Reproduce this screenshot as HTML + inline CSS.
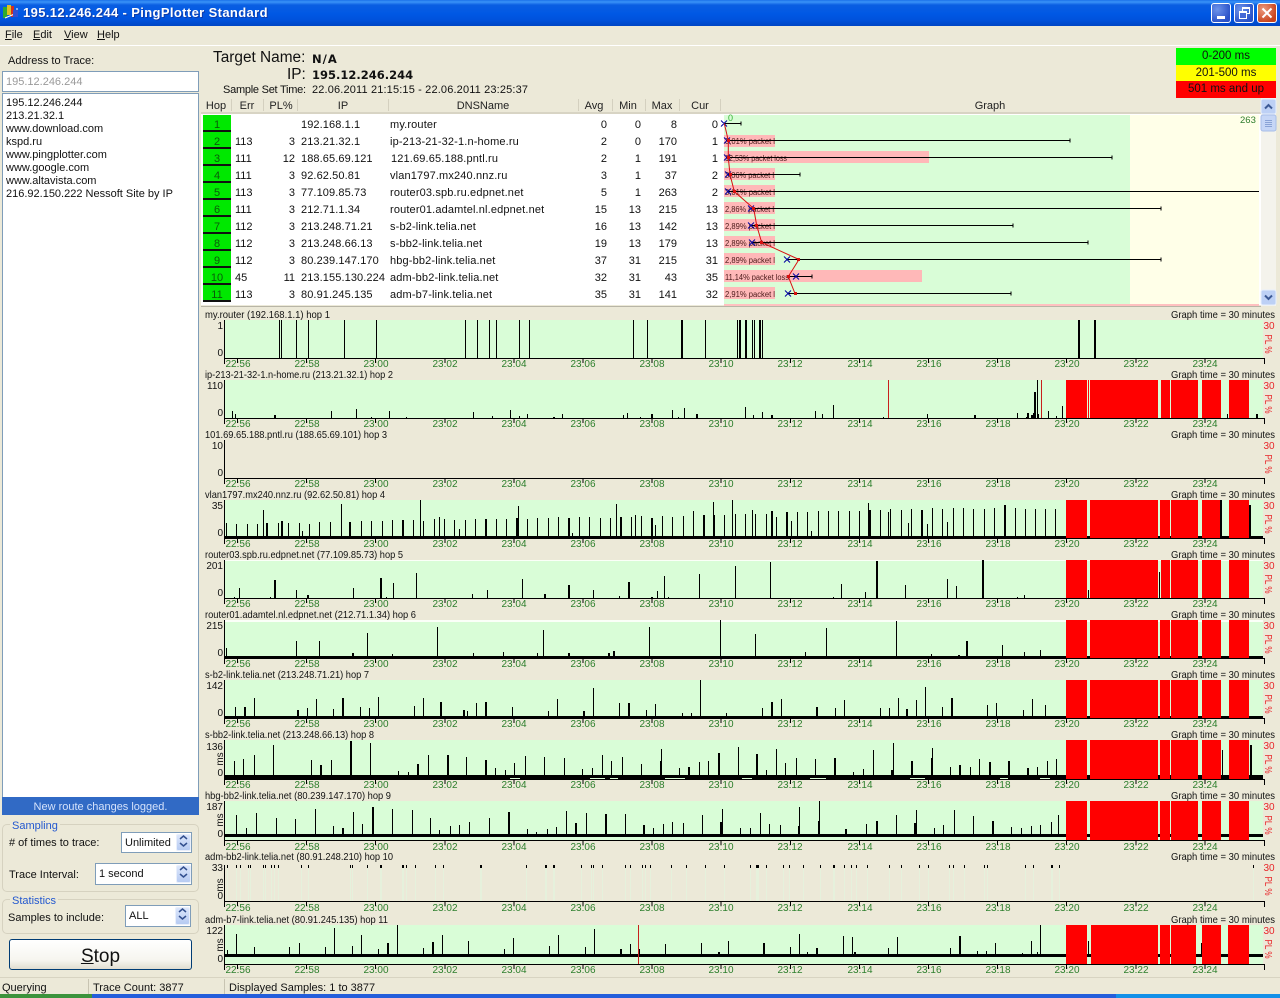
<!DOCTYPE html>
<html><head><meta charset="utf-8"><title>PingPlotter Standard</title>
<style>
*{box-sizing:border-box}
html,body{margin:0;padding:0;width:1280px;height:998px;overflow:hidden;background:#ece9d8;font-family:"Liberation Sans",sans-serif;font-size:11px;color:#111}
.a{position:absolute;white-space:nowrap}
#tb{left:0;top:0;width:1280px;height:26px;background:linear-gradient(#1c72ea 0,#3a93f7 2px,#0a5ee2 5px,#0058e4 14px,#0052dc 20px,#0046c4 26px)}
.wb{position:absolute;top:3px;width:20px;height:20px;border:1px solid #fff;border-radius:3px;background:radial-gradient(circle at 30% 30%,#6d93ea,#2a52c8 75%)}
.inp{position:absolute;background:#fff;border:1px solid #7f9db9;padding:3px 3px 1px}
.sp{position:absolute;width:15px;background:linear-gradient(#dbe6fb,#b7cbf2);border:1px solid #e9effb;border-radius:2px}
.gb{position:absolute;border:1px solid #d6d2c0;border-radius:5px}
.lg{position:absolute;background:#ece9d8;color:#2358cf;padding:0 2px;font-size:11px}
#stop{left:9px;top:939px;width:183px;height:31px;background:linear-gradient(#fff,#f6f5ef 70%,#e0ddd0);border:1px solid #003c74;border-radius:3px;font-size:19px;text-align:center;line-height:34px;color:#111}
.lgd{position:absolute;left:1176px;width:100px;text-align:center;font-size:11.5px;line-height:17px;height:17px}
svg text{font-family:"Liberation Sans",sans-serif}
</style></head><body>

<div class="a" id="tb"></div>
<svg class="a" style="left:3px;top:4px" width="16" height="16"><rect x="0" y="3" width="4" height="11" fill="#2faa2f"/><rect x="4" y="1" width="4" height="10" fill="#e0c020"/><rect x="8" y="2" width="3" height="11" fill="#d03020"/><path d="M2 14L14 9V4" stroke="#fff" fill="none"/><rect x="10" y="6" width="5" height="7" fill="#3050d0"/></svg>
<div class="a" style="left:23px;top:5px;color:#fff;font-weight:bold;font-size:13px;line-height:16px;letter-spacing:.37px;text-shadow:1px 1px 0 #0f3aa8">195.12.246.244 - PingPlotter Standard</div>
<div class="wb" style="left:1211px"><div style="position:absolute;left:5px;top:12px;width:8px;height:3px;background:#fff"></div></div>
<div class="wb" style="left:1234px"><div style="position:absolute;left:7px;top:3px;width:8px;height:7px;border:1px solid #fff;border-top-width:2px"></div><div style="position:absolute;left:4px;top:7px;width:8px;height:8px;border:1px solid #fff;border-top-width:2px;background:#4468d6"></div></div>
<div class="wb" style="left:1257px;background:radial-gradient(circle at 30% 30%,#ec9a7e,#c8431c 75%)"><svg width="18" height="18" style="position:absolute;left:0;top:0"><path d="M4.500 4.500L13.500 13.500M13.500 4.500L4.500 13.500" stroke="#fff" stroke-width="2"/></svg></div>

<div class="a" style="left:5px;top:28px;line-height:14px"><u>F</u>ile</div>
<div class="a" style="left:33px;top:28px;line-height:14px"><u>E</u>dit</div>
<div class="a" style="left:64px;top:28px;line-height:14px"><u>V</u>iew</div>
<div class="a" style="left:97px;top:28px;line-height:14px"><u>H</u>elp</div>
<div class="a" style="left:0;top:45px;width:1280px;height:1px;background:#fff"></div>

<div class="a" style="left:8px;top:54px;line-height:14px">Address to Trace:</div>
<div class="inp a" style="left:2px;top:71px;width:197px;height:21px;color:#9a9a9a;line-height:15px">195.12.246.244</div>
<div class="inp a" style="left:2px;top:93px;width:197px;height:705px;line-height:13px;padding:3px 3px">195.12.246.244<br>213.21.32.1<br>www.download.com<br>kspd.ru<br>www.pingplotter.com<br>www.google.com<br>www.altavista.com<br>216.92.150.222 Nessoft Site by IP</div>
<div class="a" style="left:2px;top:797px;width:197px;height:18px;background:#316ac5;color:#d4e2fb;text-align:center;line-height:20px">New route changes logged.</div>

<div class="gb" style="left:2px;top:824px;width:197px;height:68px"></div>
<div class="lg" style="left:10px;top:820px">Sampling</div>
<div class="a" style="left:9px;top:836px;line-height:14px">&#35; of times to trace:</div>
<div class="inp" style="left:121px;top:832px;width:71px;height:21px;line-height:15px">Unlimited</div>
<div class="sp" style="left:176px;top:834px;height:17px"></div>
<div class="a" style="left:9px;top:868px;line-height:14px">Trace Interval:</div>
<div class="inp" style="left:95px;top:863px;width:97px;height:22px;line-height:15px">1 second</div>
<div class="sp" style="left:176px;top:865px;height:18px"></div>

<div class="gb" style="left:2px;top:899px;width:197px;height:35px"></div>
<div class="lg" style="left:10px;top:895px">Statistics</div>
<div class="a" style="left:8px;top:911px;line-height:14px">Samples to include:</div>
<div class="inp" style="left:125px;top:905px;width:66px;height:22px;line-height:15px">ALL</div>
<div class="sp" style="left:175px;top:907px;height:18px"></div>
<svg class="a" style="left:0;top:830px" width="200" height="100"><path d="M180 9L183.500 6L187 9M180 13L183.500 16L187 13M180 40L183.500 37L187 40M180 44L183.500 47L187 44M179 82L182.500 79L186 82M179 86L182.500 89L186 86" fill="none" stroke="#33508f" stroke-width="1.500"/></svg>

<div class="a" id="stop"><u>S</u>top</div>

<div class="a" style="left:0;top:977px;width:1280px;height:1px;background:#d8d4c2"></div>
<div class="a" style="left:2px;top:981px;line-height:14px">Querying</div>
<div class="a" style="left:88px;top:979px;width:1px;height:15px;background:#c8c4b2"></div>
<div class="a" style="left:93px;top:981px;line-height:14px">Trace Count: 3877</div>
<div class="a" style="left:224px;top:979px;width:1px;height:15px;background:#c8c4b2"></div>
<div class="a" style="left:229px;top:981px;line-height:14px">Displayed Samples: 1 to 3877</div>
<div class="a" style="left:0;top:994px;width:1280px;height:4px;background:#245edb"></div>
<div class="a" style="left:0;top:994px;width:92px;height:4px;background:#3c933c"></div>
<div class="a" style="left:1116px;top:994px;width:164px;height:4px;background:#1290e8"></div>

<div class="a" style="left:213px;top:49px;font-size:15.400px;line-height:18px">Target Name:</div>
<div class="a" style="left:312px;top:51px;font-family:'DejaVu Sans',sans-serif;font-weight:bold;font-size:11.500px;line-height:16px;letter-spacing:1px">N/A</div>
<div class="a" style="left:287px;top:66px;font-size:15.400px;line-height:18px">IP:</div>
<div class="a" style="left:312px;top:67px;font-family:'DejaVu Sans',sans-serif;font-weight:bold;font-size:11.500px;line-height:16px">195.12.246.244</div>
<div class="a" style="left:223px;top:83px;line-height:14px;letter-spacing:-.25px">Sample Set Time:</div>
<div class="a" style="left:312px;top:83px;line-height:14px;letter-spacing:.15px">22.06.2011 21:15:15 - 22.06.2011 23:25:37</div>

<div class="lgd" style="top:48px;background:#00ff00">0-200 ms</div>
<div class="lgd" style="top:65px;background:#ffff00">201-500 ms</div>
<div class="lgd" style="top:81px;background:#ff0000">501 ms and up</div>

<svg class="a" style="left:0;top:0" width="1280" height="998" viewBox="0 0 1280 998">
<defs><linearGradient id="g10" gradientUnits="userSpaceOnUse" x1="0" y1="865" x2="0" y2="901"><stop offset=".08" stop-color="#000"/><stop offset=".08" stop-color="#e6f1dc"/></linearGradient></defs>

<!-- table -->
<rect x="201" y="112" width="1060" height="2" fill="#d8d4c4"/>
<rect x="201" y="114" width="1060" height="191" fill="#fff"/>
<rect x="724" y="115" width="406" height="190" fill="#d9fdd7"/>
<rect x="1130" y="115" width="129" height="190" fill="#ffffe8"/>
<rect x="724" y="304" width="535" height="2" fill="#ffc0c0"/>
<rect x="201" y="306" width="1060" height="1" fill="#b8b5a6"/>
<g fill="#d4d0bf"><rect x="231" y="99" width="1" height="12"/><rect x="263" y="99" width="1" height="12"/><rect x="297" y="99" width="1" height="12"/><rect x="388" y="99" width="1" height="12"/><rect x="578" y="99" width="1" height="12"/><rect x="612" y="99" width="1" height="12"/><rect x="645" y="99" width="1" height="12"/><rect x="679" y="99" width="1" height="12"/><rect x="720" y="99" width="1" height="12"/></g>
<g font-size="11" text-anchor="middle" fill="#222">
<text x="216" y="109">Hop</text><text x="247" y="109">Err</text><text x="281" y="109">PL%</text><text x="343" y="109">IP</text><text x="483" y="109">DNSName</text><text x="594" y="109">Avg</text><text x="628" y="109">Min</text><text x="662" y="109">Max</text><text x="700" y="109">Cur</text><text x="990" y="109">Graph</text>
</g>
<!-- hop cells -->
<g fill="#00e800"><rect x="203" y="115" width="28" height="15"/><rect x="203" y="132" width="28" height="15"/><rect x="203" y="149" width="28" height="15"/><rect x="203" y="166" width="28" height="15"/><rect x="203" y="183" width="28" height="15"/><rect x="203" y="200" width="28" height="15"/><rect x="203" y="217" width="28" height="15"/><rect x="203" y="234" width="28" height="15"/><rect x="203" y="251" width="28" height="15"/><rect x="203" y="268" width="28" height="15"/><rect x="203" y="285" width="28" height="15"/></g>
<g fill="#111"><rect x="203" y="130" width="28" height="2"/><rect x="203" y="147" width="28" height="2"/><rect x="203" y="164" width="28" height="2"/><rect x="203" y="181" width="28" height="2"/><rect x="203" y="198" width="28" height="2"/><rect x="203" y="215" width="28" height="2"/><rect x="203" y="232" width="28" height="2"/><rect x="203" y="249" width="28" height="2"/><rect x="203" y="266" width="28" height="2"/><rect x="203" y="283" width="28" height="2"/><rect x="203" y="300" width="28" height="2"/></g>
<g font-size="11" text-anchor="middle" fill="#0a5a0a"><text x="217" y="128">1</text><text x="217" y="145">2</text><text x="217" y="162">3</text><text x="217" y="179">4</text><text x="217" y="196">5</text><text x="217" y="213">6</text><text x="217" y="230">7</text><text x="217" y="247">8</text><text x="217" y="264">9</text><text x="217" y="281">10</text><text x="217" y="298">11</text></g>
<g font-size="11" fill="#111">
<text x="235" y="145">113</text><text x="235" y="162">111</text><text x="235" y="179">111</text><text x="235" y="196">113</text><text x="235" y="213">111</text><text x="235" y="230">112</text><text x="235" y="247">112</text><text x="235" y="264">112</text><text x="235" y="281">45</text><text x="235" y="298">113</text>
<g letter-spacing=".1"><text x="301" y="128">192.168.1.1</text><text x="301" y="145">213.21.32.1</text><text x="301" y="162">188.65.69.121</text><text x="301" y="179">92.62.50.81</text><text x="301" y="196">77.109.85.73</text><text x="301" y="213">212.71.1.34</text><text x="301" y="230">213.248.71.21</text><text x="301" y="247">213.248.66.13</text><text x="301" y="264">80.239.147.170</text><text x="301" y="281">213.155.130.224</text><text x="301" y="298">80.91.245.135</text></g>
<g letter-spacing=".15"><text x="390" y="128">my.router</text><text x="390" y="145">ip-213-21-32-1.n-home.ru</text><text x="391" y="162">121.69.65.188.pntl.ru</text><text x="390" y="179">vlan1797.mx240.nnz.ru</text><text x="390" y="196">router03.spb.ru.edpnet.net</text><text x="390" y="213">router01.adamtel.nl.edpnet.net</text><text x="390" y="230">s-b2-link.telia.net</text><text x="390" y="247">s-bb2-link.telia.net</text><text x="390" y="264">hbg-bb2-link.telia.net</text><text x="390" y="281">adm-bb2-link.telia.net</text><text x="390" y="298">adm-b7-link.telia.net</text></g>
</g>
<g font-size="11" fill="#111" text-anchor="end">
<text x="295" y="145">3</text><text x="295" y="162">12</text><text x="295" y="179">3</text><text x="295" y="196">3</text><text x="295" y="213">3</text><text x="295" y="230">3</text><text x="295" y="247">3</text><text x="295" y="264">3</text><text x="295" y="281">11</text><text x="295" y="298">3</text>
<text x="607" y="128">0</text><text x="607" y="145">2</text><text x="607" y="162">2</text><text x="607" y="179">3</text><text x="607" y="196">5</text><text x="607" y="213">15</text><text x="607" y="230">16</text><text x="607" y="247">19</text><text x="607" y="264">37</text><text x="607" y="281">32</text><text x="607" y="298">35</text>
<text x="641" y="128">0</text><text x="641" y="145">0</text><text x="641" y="162">1</text><text x="641" y="179">1</text><text x="641" y="196">1</text><text x="641" y="213">13</text><text x="641" y="230">13</text><text x="641" y="247">13</text><text x="641" y="264">31</text><text x="641" y="281">31</text><text x="641" y="298">31</text>
<text x="677" y="128">8</text><text x="677" y="145">170</text><text x="677" y="162">191</text><text x="677" y="179">37</text><text x="677" y="196">263</text><text x="677" y="213">215</text><text x="677" y="230">142</text><text x="677" y="247">179</text><text x="677" y="264">215</text><text x="677" y="281">43</text><text x="677" y="298">141</text>
<text x="718" y="128">0</text><text x="718" y="145">1</text><text x="718" y="162">1</text><text x="718" y="179">2</text><text x="718" y="196">2</text><text x="718" y="213">13</text><text x="718" y="230">13</text><text x="718" y="247">13</text><text x="718" y="264">31</text><text x="718" y="281">35</text><text x="718" y="298">32</text>
</g>
<!-- graph bars -->
<g fill="#ffb8b8"><rect x="724" y="135" width="51" height="12"/><rect x="724" y="151" width="205" height="12"/><rect x="724" y="168" width="51" height="12"/><rect x="724" y="185" width="51" height="12"/><rect x="724" y="202" width="51" height="12"/><rect x="724" y="219" width="51" height="12"/><rect x="724" y="236" width="51" height="12"/><rect x="724" y="253" width="51" height="12"/><rect x="724" y="270" width="198" height="12"/><rect x="724" y="287" width="51" height="12"/></g>
<g font-size="8" fill="#4a1818">
<text x="725" y="144" textLength="50" lengthAdjust="spacingAndGlyphs">3,01% packet l</text><text x="725" y="161" textLength="62" lengthAdjust="spacingAndGlyphs">12,53% packet loss</text><text x="725" y="178" textLength="49" lengthAdjust="spacingAndGlyphs">3,06% packet l</text><text x="725" y="195" textLength="50" lengthAdjust="spacingAndGlyphs">3,01% packet l</text><text x="725" y="212" textLength="49" lengthAdjust="spacingAndGlyphs">2,86% packet l</text><text x="725" y="229" textLength="50" lengthAdjust="spacingAndGlyphs">2,89% packet l</text><text x="725" y="246" textLength="50" lengthAdjust="spacingAndGlyphs">2,89% packet l</text><text x="725" y="263" textLength="50" lengthAdjust="spacingAndGlyphs">2,89% packet l</text><text x="725" y="280" textLength="64" lengthAdjust="spacingAndGlyphs">11,14% packet loss</text><text x="725" y="297" textLength="50" lengthAdjust="spacingAndGlyphs">2,91% packet l</text>
</g>
<path d="M724 123.500H741M741 121.500V125.500M726 140.500H1070M1070 138.500V142.500M726 157.500H1112M1112 155.500V159.500M728 174.500H800M800 172.500V176.500M728 191.500H1259M751 208.500H1161M1161 206.500V210.500M751 225.500H1013M1013 223.500V227.500M752 242.500H1088M1088 240.500V244.500M787 259.500H1161M1161 257.500V261.500M788 276.500H812M812 274.500V278.500M788 293.500H1011M1011 291.500V295.500" stroke="#000" fill="none" shape-rendering="crispEdges"/>
<path d="M721 120.500l6 6m0 -6l-6 6M724 137.500l6 6m0 -6l-6 6M724 154.500l6 6m0 -6l-6 6M725 171.500l6 6m0 -6l-6 6M725 188.500l6 6m0 -6l-6 6M748 205.500l6 6m0 -6l-6 6M748 222.500l6 6m0 -6l-6 6M749 239.500l6 6m0 -6l-6 6M784 256.500l6 6m0 -6l-6 6M793 273.500l6 6m0 -6l-6 6M785 290.500l6 6m0 -6l-6 6" stroke="#0000a0" fill="none"/>
<path d="M724.300 123.500L728.300 140.500L728.300 157.500L730 174.500L734.300 191.500L753.700 208.500L756.700 225.500L761.700 242.500L799 259.500L788.300 276.500L795 293.500" stroke="#d81010" fill="none" stroke-width="1"/>
<g fill="#d81010"><rect x="727" y="139" width="3" height="3"/><rect x="727" y="156" width="3" height="3"/><rect x="729" y="173" width="3" height="3"/><rect x="733" y="190" width="3" height="3"/><rect x="752" y="207" width="3" height="3"/><rect x="755" y="224" width="3" height="3"/><rect x="760" y="241" width="3" height="3"/><rect x="797" y="258" width="3" height="3"/><rect x="787" y="275" width="3" height="3"/><rect x="794" y="292" width="3" height="3"/></g>
<text x="728" y="121" font-size="9" fill="#33b033">0</text><text x="1240" y="123" font-size="9.500" fill="#2f7d2f">263</text>
<!-- scrollbar -->
<rect x="1261" y="98" width="15" height="208" fill="#f4f3ec"/>
<rect x="1261" y="99" width="15" height="15" rx="2" fill="#bdd0f5" stroke="#e8effc"/><path d="M1265 108.500L1268.500 105L1272 108.500" stroke="#3d5a96" stroke-width="2" fill="none"/>
<rect x="1261" y="115" width="15" height="16" rx="2" fill="#c6d6f6" stroke="#a8bee8"/><path d="M1265 120.500H1272M1265 122.500H1272M1265 124.500H1272M1265 126.500H1272" stroke="#8aa3d6"/>
<rect x="1261" y="290" width="15" height="15" rx="2" fill="#bdd0f5" stroke="#e8effc"/><path d="M1265 295.500L1268.500 299L1272 295.500" stroke="#3d5a96" stroke-width="2" fill="none"/>

<!-- chart plots -->
<g fill="#d9fdd7">
<rect x="225" y="320" width="1038" height="38"/><rect x="225" y="380" width="1038" height="38"/><rect x="225" y="500" width="1038" height="38"/><rect x="225" y="560" width="1038" height="38"/><rect x="225" y="620" width="1038" height="38"/><rect x="225" y="680" width="1038" height="38"/><rect x="225" y="740" width="1038" height="39"/><rect x="225" y="801" width="1038" height="39"/><rect x="225" y="925" width="1038" height="39"/>
</g>
<g fill="#fbfff8"><rect x="225" y="620" width="1038" height="2"/><rect x="225" y="560" width="1038" height="1"/></g>

<!-- thick baselines -->
<g fill="#000"><rect x="225" y="536" width="1038" height="3"/><rect x="225" y="656" width="1038" height="3"/><rect x="225" y="716" width="1038" height="3"/><rect x="225" y="775" width="1038" height="4"/><rect x="225" y="834" width="1038" height="3"/><rect x="225" y="954" width="1038" height="3"/></g>
<path d="M510 778.500H520M590 778.500H605M610 778.500H618M665 778.500H685M742 778.500H752M810 778.500H826M910 778.500H925M1000 778.500H1008M1040 778.500H1050" stroke="#d9fdd7" shape-rendering="crispEdges"/>

<g fill="none" stroke="#000" shape-rendering="crispEdges">
<!-- 1 -->
<path d="M279.500 320V358M281.500 320V358M296.500 320V358M308.500 320V358M344.500 320V358M376.500 320V358M465.500 320V358M477.500 320V358M489.500 320V358M496.500 320V358M519.500 320V358M529.500 320V358M633.500 320V358M647.500 320V358M705.500 320V358M737.500 320V358M752.500 320V358M754.500 320V358M762.500 320V358"/>
<path stroke-width="2" d="M682 320V358M740 320V358M746 320V358M760 320V358M1079 320V358M1095 320V358"/>
<!-- 2 -->
<path d="M232.500 411V418M235.500 414V418M331.500 411V418M356.500 409V418M389.500 411V418M371.500 417V418M406.500 417V418M473.500 412V418M492.500 416V418M510.500 410V418M519.500 416V418M527.500 414V418M562.500 414V418M623.500 415V418M627.500 413V418M640.500 417V418M672.500 410V418M678.500 417V418M684.500 408V418M745.500 407V418M753.500 415V418M762.500 412V418M815.500 411V418M822.500 414V418M833.500 405V418M883.500 417V418M927.500 414V418M1017.500 413V418M1026.500 417V418M1031.500 417V418M1033.500 413V418M1037.500 380V418M1038.500 414V418M1048.500 411V418M1056.500 416V418M1062.500 406V418M1227.500 414V418"/>
<path stroke-width="2" d="M275 415V418M554 417V418M652 414V418M697 414V418M772 415V418M975 415V418M1028 413V418M1032 415V418M1035 392V418M1257 414V418"/>
<path stroke="#c8201c" d="M888.500 380V418M1041.500 380V418"/>
<!-- 4 -->
<path d="M226.500 523V536M236.500 524V536M247.500 524V536M257.500 524V536M263.500 510V536M278.500 523V536M288.500 523V536M299.500 523V536M302.500 531V536M309.500 524V536M319.500 522V536M330.500 522V536M341.500 504V536M361.500 521V536M371.500 521V536M382.500 521V536M392.500 520V536M413.500 520V536M420.500 500V536M423.500 521V536M434.500 519V536M439.500 517V536M444.500 519V536M454.500 520V536M459.500 529V536M465.500 520V536M475.500 519V536M496.500 519V536M506.500 519V536M518.500 506V536M527.500 519V536M537.500 518V536M548.500 518V536M558.500 517V536M572.500 533V536M579.500 517V536M589.500 517V536M600.500 518V536M610.500 518V536M616.500 504V536M631.500 517V536M635.500 515V536M641.500 516V536M655.500 525V536M662.500 516V536M672.500 517V536M683.500 516V536M693.500 511V536M713.500 502V536M714.500 515V536M724.500 515V536M732.500 500V536M735.500 514V536M745.500 514V536M752.500 510V536M755.500 514V536M766.500 514V536M776.500 517V536M791.500 521V536M797.500 512V536M807.500 512V536M811.500 531V536M818.500 511V536M828.500 511V536M838.500 511V536M849.500 511V536M859.500 511V536M868.500 503V536M880.500 510V536M888.500 512V536M890.500 509V536M901.500 510V536M908.500 523V536M911.500 509V536M927.500 524V536M932.500 508V536M942.500 509V536M947.500 522V536M953.500 508V536M963.500 508V536M973.500 509V536M984.500 509V536M994.500 508V536M1015.500 508V536M1025.500 509V536M1035.500 509V536M1045.500 509V536M1055.500 509V536"/>
<path stroke-width="2" d="M267 523V536M282 521V536M350 522V536M403 520V536M486 519V536M517 518V536M569 518V536M621 517V536M652 518V536M704 515V536M772 511V536M787 512V536M870 510V536M922 510V536M1005 505V536M1221 500V536M1250 505V536"/>
<!-- 5 -->
<path d="M234.500 597V598M239.500 588V598M270.500 597V598M296.500 590V598M353.500 588V598M386.500 597V598M393.500 583V598M416.500 573V598M472.500 594V598M487.500 590V598M522.500 579V598M593.500 590V598M619.500 596V598M657.500 591V598M664.500 576V598M668.500 597V598M699.500 574V598M735.500 566V598M770.500 562V598M833.500 597V598M841.500 584V598M865.500 592V598M905.500 585V598M947.500 579V598M956.500 586V598M1017.500 597V598M1024.500 595V598M1159.500 572V598M1088.500 590V598"/>
<path stroke-width="2" d="M275 580V598M308 595V598M381 578V598M545 594V598M569 585V598M629 582V598M652 597V598M877 561V598M983 560V598"/>
<!-- 6 -->
<path d="M226.500 648V656M296.500 641V656M319.500 641V656M367.500 633V656M392.500 654V656M437.500 627V656M473.500 653V656M503.500 652V656M537.500 653V656M543.500 630V656M649.500 627V656M720.500 620V656M755.500 634V656M805.500 652V656M826.500 628V656M896.500 621V656M931.500 654V656M1002.500 645V656M1024.500 652V656M1040.500 650V656"/>
<path stroke-width="2" d="M353 653V656M569 653V656M609 653V656M614 651V656M959 655V656M967 641V656"/>
<!-- 7 -->
<path d="M235.500 707V716M254.500 698V716M307.500 708V716M316.500 699V716M333.500 709V716M360.500 707V716M369.500 708V716M378.500 697V716M414.500 706V716M423.500 698V716M467.500 711V716M476.500 703V716M512.500 707V716M548.500 711V716M557.500 699V716M593.500 688V716M619.500 703V716M646.500 710V716M655.500 704V716M682.500 713V716M691.500 713V716M700.500 680V716M726.500 713V716M762.500 708V716M781.500 699V716M835.500 708V716M844.500 700V716M880.500 708V716M889.500 708V716M898.500 698V716M916.500 700V716M925.500 687V716M942.500 707V716M987.500 705V716M996.500 703V716M1023.500 710V716M1032.500 699V716M1045.500 705V716"/>
<path stroke-width="2" d="M245 707V716M298 710V716M343 698V716M441 702V716M464 710V716M486 702V716M584 711V716M629 703V716M772 702V716M817 707V716M907 709V716M952 698V716"/>
<!-- 8 -->
<path d="M234.500 761V776M243.500 759V776M254.500 755V776M273.500 745V776M311.500 760V776M331.500 760V776M370.500 743V776M398.500 771V776M408.500 772V776M428.500 755V776M466.500 757V776M495.500 768V776M505.500 770V776M514.500 763V776M525.500 756V776M544.500 757V776M564.500 758V776M582.500 769V776M592.500 768V776M602.500 755V776M611.500 761V776M622.500 757V776M641.500 764V776M661.500 749V776M679.500 768V776M699.500 762V776M708.500 761V776M738.500 747V776M766.500 770V776M776.500 749V776M785.500 763V776M796.500 758V776M815.500 759V776M853.500 772V776M863.500 769V776M873.500 750V776M893.500 743V776M932.500 748V776M950.500 767V776M970.500 767V776M979.500 759V776M1037.500 767V776M1047.500 761V776M1056.500 759V776M1222.500 750V776"/>
<path stroke-width="2" d="M321 765V776M351 741V776M418 764V776M448 755V776M486 760V776M661 761V776M689 767V776M719 753V776M757 754V776M835 758V776M892 770V776M912 761V776M932 758V776M960 765V776M990 762V776M1009 761V776M1028 768V776M1251 745V776"/>
<!-- 9 -->
<path d="M236.500 815V835M246.500 828V835M256.500 813V835M276.500 818V835M295.500 819V835M315.500 809V835M333.500 826V835M353.500 812V835M362.500 824V835M392.500 809V835M412.500 810V835M430.500 818V835M439.500 830V835M450.500 826V835M459.500 825V835M469.500 822V835M489.500 818V835M527.500 829V835M536.500 832V835M547.500 829V835M556.500 827V835M566.500 811V835M586.500 813V835M625.500 814V835M653.500 828V835M663.500 824V835M672.500 822V835M683.500 823V835M702.500 815V835M722.500 809V835M740.500 828V835M750.500 828V835M760.500 813V835M769.500 824V835M780.500 825V835M799.500 807V835M819.500 801V835M866.500 824V835M896.500 815V835M916.500 810V835M934.500 828V835M943.500 825V835M954.500 810V835M973.500 816V835M1011.500 827V835M1021.500 828V835M1031.500 826V835M1040.500 825V835M1051.500 822V835M1058.500 815V835"/>
<path stroke-width="2" d="M343 828V835M373 807V835M509 812V835M576 823V835M606 814V835M644 825V835M721 822V835M799 826V835M819 821V835M846 829V835M877 821V835M915 823V835M993 821V835"/>
<!-- 10 -->
<path stroke="url(#g10)" d="M227.500 865V901M236.500 865V901M240.500 865V901M248.500 865V901M250.500 865V901M263.500 865V901M265.500 865V901M271.500 865V901M274.500 865V901M278.500 865V901M301.500 865V901M308.500 865V901M350.500 865V901M352.500 865V901M367.500 865V901M381.500 865V901M403.500 865V901M406.500 865V901M415.500 865V901M435.500 865V901M443.500 865V901M481.500 865V901M526.500 865V901M546.500 865V901M554.500 865V901M581.500 865V901M591.500 865V901M593.500 865V901M602.500 865V901M625.500 865V901M630.500 865V901M642.500 865V901M645.500 865V901M650.500 865V901M671.500 865V901M686.500 865V901M705.500 865V901M724.500 865V901M750.500 865V901M757.500 865V901M758.500 865V901M766.500 865V901M783.500 865V901M789.500 865V901M803.500 865V901M820.500 865V901M833.500 865V901M844.500 865V901M851.500 865V901M856.500 865V901M867.500 865V901M889.500 865V901M901.500 865V901M919.500 865V901M928.500 865V901M949.500 865V901M953.500 865V901M964.500 865V901M984.500 865V901M987.500 865V901M1025.500 865V901M1033.500 865V901M1052.500 865V901M1059.500 865V901M1253.500 865V901"/>
<path stroke="url(#g10)" stroke-width="2" d="M381 865V901M403 865V901M481 865V901M546 865V901M554 865V901M757 865V901M834 865V901M1052 865V901"/>
<!-- 11 -->
<path d="M227.500 950V955M236.500 934V955M254.500 947V955M289.500 947V955M299.500 943V955M325.500 947V955M334.500 928V955M352.500 946V955M361.500 935V955M378.500 949V955M397.500 925V955M423.500 948V955M442.500 935V955M468.500 941V955M504.500 949V955M513.500 938V955M549.500 946V955M558.500 935V955M585.500 947V955M594.500 929V955M630.500 944V955M665.500 944V955M701.500 943V955M728.500 941V955M790.500 947V955M799.500 934V955M807.500 952V955M843.500 936V955M852.500 937V955M888.500 948V955M897.500 937V955M950.500 948V955M977.500 951V955M986.500 951V955M995.500 943V955M1022.500 953V955M1031.500 941V955M1037.500 952V955M1040.500 925V955M1088.500 941V955M1201.500 943V955"/>
<path stroke-width="2" d="M388 943V955M433 942V955M621 949V955M639 949V955M719 952V955M764 943V955M817 948V955M855 952V955M960 936V955"/>
<path stroke="#c8201c" d="M638.500 925V964"/>
<!-- axes -->
<path d="M224.500 320V364M224.500 380V424M224.500 440V484M224.500 500V544M224.500 560V604M224.500 620V664M224.500 680V724M224.500 740V785M224.500 801V846M224.500 865V907M224.500 925V970M1264.500 358V364M1264.500 418V424M1264.500 478V484M1264.500 538V544M1264.500 598V604M1264.500 658V664M1264.500 718V724M1264.500 779V785M1264.500 840V846M1264.500 901V907M1264.500 964V970M224 358.500H1265M224 418.500H1265M224 478.500H1265M224 538.500H1265M224 598.500H1265M224 658.500H1265M224 718.500H1265M224 779.500H1265M224 840.500H1265M224 901.500H1265M224 964.500H1265"/>
</g>

<!-- red blocks -->
<g fill="#ff0000">
<rect x="1066" y="380" width="21" height="38"/><rect x="1088" y="380" width="1" height="38"/><rect x="1090" y="380" width="68" height="38"/><rect x="1161" y="380" width="9" height="38"/><rect x="1171" y="380" width="27" height="38"/><rect x="1202" y="380" width="19" height="38"/><rect x="1229" y="380" width="20" height="38"/>
<rect x="1066" y="500" width="21" height="38"/><rect x="1090" y="500" width="68" height="38"/><rect x="1160" y="500" width="10" height="38"/><rect x="1171" y="500" width="27" height="38"/><rect x="1202" y="500" width="18" height="38"/><rect x="1229" y="500" width="20" height="38"/>
<rect x="1066" y="560" width="21" height="38"/><rect x="1090" y="560" width="68" height="38"/><rect x="1161" y="560" width="9" height="38"/><rect x="1171" y="560" width="27" height="38"/><rect x="1202" y="560" width="19" height="38"/><rect x="1229" y="560" width="20" height="38"/>
<rect x="1066" y="620" width="21" height="38"/><rect x="1090" y="620" width="68" height="38"/><rect x="1160" y="620" width="10" height="38"/><rect x="1171" y="620" width="27" height="38"/><rect x="1202" y="620" width="19" height="38"/><rect x="1229" y="620" width="20" height="38"/>
<rect x="1066" y="680" width="21" height="38"/><rect x="1090" y="680" width="68" height="38"/><rect x="1160" y="680" width="10" height="38"/><rect x="1171" y="680" width="27" height="38"/><rect x="1202" y="680" width="19" height="38"/><rect x="1229" y="680" width="20" height="38"/>
<rect x="1066" y="740" width="21" height="39"/><rect x="1090" y="740" width="68" height="39"/><rect x="1160" y="740" width="10" height="39"/><rect x="1171" y="740" width="27" height="39"/><rect x="1202" y="740" width="19" height="39"/><rect x="1229" y="740" width="20" height="39"/>
<rect x="1066" y="801" width="21" height="39"/><rect x="1090" y="801" width="68" height="39"/><rect x="1160" y="801" width="10" height="39"/><rect x="1171" y="801" width="27" height="39"/><rect x="1202" y="801" width="19" height="39"/><rect x="1229" y="801" width="20" height="39"/>
<rect x="1066" y="925" width="21" height="39"/><rect x="1091" y="925" width="67" height="39"/><rect x="1160" y="925" width="10" height="39"/><rect x="1171" y="925" width="25" height="39"/><rect x="1202" y="925" width="19" height="39"/><rect x="1228" y="925" width="21" height="39"/>
</g>

<!-- chart titles -->
<g font-size="10.500" fill="#111">
<text x="205" y="318" textLength="125" lengthAdjust="spacingAndGlyphs">my.router (192.168.1.1) hop 1</text>
<text x="205" y="378" textLength="188" lengthAdjust="spacingAndGlyphs">ip-213-21-32-1.n-home.ru (213.21.32.1) hop 2</text>
<text x="205" y="438" textLength="182" lengthAdjust="spacingAndGlyphs">101.69.65.188.pntl.ru (188.65.69.101) hop 3</text>
<text x="205" y="498" textLength="180" lengthAdjust="spacingAndGlyphs">vlan1797.mx240.nnz.ru (92.62.50.81) hop 4</text>
<text x="205" y="558" textLength="198" lengthAdjust="spacingAndGlyphs">router03.spb.ru.edpnet.net (77.109.85.73) hop 5</text>
<text x="205" y="618" textLength="211" lengthAdjust="spacingAndGlyphs">router01.adamtel.nl.edpnet.net (212.71.1.34) hop 6</text>
<text x="205" y="678" textLength="164" lengthAdjust="spacingAndGlyphs">s-b2-link.telia.net (213.248.71.21) hop 7</text>
<text x="205" y="738" textLength="169" lengthAdjust="spacingAndGlyphs">s-bb2-link.telia.net (213.248.66.13) hop 8</text>
<text x="205" y="799" textLength="186" lengthAdjust="spacingAndGlyphs">hbg-bb2-link.telia.net (80.239.147.170) hop 9</text>
<text x="205" y="860" textLength="188" lengthAdjust="spacingAndGlyphs">adm-bb2-link.telia.net (80.91.248.210) hop 10</text>
<text x="205" y="923" textLength="183" lengthAdjust="spacingAndGlyphs">adm-b7-link.telia.net (80.91.245.135) hop 11</text>
<text x="1171" y="318" textLength="104" lengthAdjust="spacingAndGlyphs">Graph time = 30 minutes</text>
<text x="1171" y="378" textLength="104" lengthAdjust="spacingAndGlyphs">Graph time = 30 minutes</text>
<text x="1171" y="438" textLength="104" lengthAdjust="spacingAndGlyphs">Graph time = 30 minutes</text>
<text x="1171" y="498" textLength="104" lengthAdjust="spacingAndGlyphs">Graph time = 30 minutes</text>
<text x="1171" y="558" textLength="104" lengthAdjust="spacingAndGlyphs">Graph time = 30 minutes</text>
<text x="1171" y="618" textLength="104" lengthAdjust="spacingAndGlyphs">Graph time = 30 minutes</text>
<text x="1171" y="678" textLength="104" lengthAdjust="spacingAndGlyphs">Graph time = 30 minutes</text>
<text x="1171" y="738" textLength="104" lengthAdjust="spacingAndGlyphs">Graph time = 30 minutes</text>
<text x="1171" y="799" textLength="104" lengthAdjust="spacingAndGlyphs">Graph time = 30 minutes</text>
<text x="1171" y="860" textLength="104" lengthAdjust="spacingAndGlyphs">Graph time = 30 minutes</text>
<text x="1171" y="923" textLength="104" lengthAdjust="spacingAndGlyphs">Graph time = 30 minutes</text>
</g>

<!-- y labels -->
<g font-size="10" text-anchor="end" fill="#111">
<text x="223" y="329">1</text><text x="223" y="356">0</text>
<text x="223" y="389">110</text><text x="223" y="416">0</text>
<text x="223" y="449">10</text><text x="223" y="476">0</text>
<text x="223" y="509">35</text><text x="223" y="536">0</text>
<text x="223" y="569">201</text><text x="223" y="596">0</text>
<text x="223" y="629">215</text><text x="223" y="656">0</text>
<text x="223" y="689">142</text><text x="223" y="716">0</text>
<text x="223" y="750">136</text><text x="223" y="776">0</text>
<text x="223" y="810">187</text><text x="223" y="837">0</text>
<text x="223" y="871">33</text><text x="223" y="899">0</text>
<text x="223" y="934">122</text><text x="223" y="962">0</text>
</g>
<g font-size="10" text-anchor="middle" fill="#111">
<text transform="translate(223,759) rotate(-90)">ms</text>
<text transform="translate(223,820) rotate(-90)">ms</text>
<text transform="translate(223,885) rotate(-90)">ms</text>
<text transform="translate(223,945) rotate(-90)">ms</text>
</g>
<!-- PL -->
<g font-size="10" fill="#e8262a" text-anchor="middle">
<text x="1269" y="329">30</text><text transform="translate(1265,344) rotate(90)" textLength="19" lengthAdjust="spacingAndGlyphs">PL %</text>
<text x="1269" y="389">30</text><text transform="translate(1265,404) rotate(90)" textLength="19" lengthAdjust="spacingAndGlyphs">PL %</text>
<text x="1269" y="449">30</text><text transform="translate(1265,464) rotate(90)" textLength="19" lengthAdjust="spacingAndGlyphs">PL %</text>
<text x="1269" y="509">30</text><text transform="translate(1265,524) rotate(90)" textLength="19" lengthAdjust="spacingAndGlyphs">PL %</text>
<text x="1269" y="569">30</text><text transform="translate(1265,584) rotate(90)" textLength="19" lengthAdjust="spacingAndGlyphs">PL %</text>
<text x="1269" y="629">30</text><text transform="translate(1265,644) rotate(90)" textLength="19" lengthAdjust="spacingAndGlyphs">PL %</text>
<text x="1269" y="689">30</text><text transform="translate(1265,704) rotate(90)" textLength="19" lengthAdjust="spacingAndGlyphs">PL %</text>
<text x="1269" y="749">30</text><text transform="translate(1265,764) rotate(90)" textLength="19" lengthAdjust="spacingAndGlyphs">PL %</text>
<text x="1269" y="810">30</text><text transform="translate(1265,825) rotate(90)" textLength="19" lengthAdjust="spacingAndGlyphs">PL %</text>
<text x="1269" y="871">30</text><text transform="translate(1265,886) rotate(90)" textLength="19" lengthAdjust="spacingAndGlyphs">PL %</text>
<text x="1269" y="934">30</text><text transform="translate(1265,949) rotate(90)" textLength="19" lengthAdjust="spacingAndGlyphs">PL %</text>
</g>

<!-- x labels -->
<g font-size="10" fill="#2c7f2c" text-anchor="middle">
<text x="238" y="367">22:56</text><text x="307" y="367">22:58</text><text x="376" y="367">23:00</text><text x="445" y="367">23:02</text><text x="514" y="367">23:04</text><text x="583" y="367">23:06</text><text x="652" y="367">23:08</text><text x="721" y="367">23:10</text><text x="790" y="367">23:12</text><text x="860" y="367">23:14</text><text x="929" y="367">23:16</text><text x="998" y="367">23:18</text><text x="1067" y="367">23:20</text><text x="1136" y="367">23:22</text><text x="1205" y="367">23:24</text>
<text x="238" y="427">22:56</text><text x="307" y="427">22:58</text><text x="376" y="427">23:00</text><text x="445" y="427">23:02</text><text x="514" y="427">23:04</text><text x="583" y="427">23:06</text><text x="652" y="427">23:08</text><text x="721" y="427">23:10</text><text x="790" y="427">23:12</text><text x="860" y="427">23:14</text><text x="929" y="427">23:16</text><text x="998" y="427">23:18</text><text x="1067" y="427">23:20</text><text x="1136" y="427">23:22</text><text x="1205" y="427">23:24</text>
<text x="238" y="487">22:56</text><text x="307" y="487">22:58</text><text x="376" y="487">23:00</text><text x="445" y="487">23:02</text><text x="514" y="487">23:04</text><text x="583" y="487">23:06</text><text x="652" y="487">23:08</text><text x="721" y="487">23:10</text><text x="790" y="487">23:12</text><text x="860" y="487">23:14</text><text x="929" y="487">23:16</text><text x="998" y="487">23:18</text><text x="1067" y="487">23:20</text><text x="1136" y="487">23:22</text><text x="1205" y="487">23:24</text>
<text x="238" y="547">22:56</text><text x="307" y="547">22:58</text><text x="376" y="547">23:00</text><text x="445" y="547">23:02</text><text x="514" y="547">23:04</text><text x="583" y="547">23:06</text><text x="652" y="547">23:08</text><text x="721" y="547">23:10</text><text x="790" y="547">23:12</text><text x="860" y="547">23:14</text><text x="929" y="547">23:16</text><text x="998" y="547">23:18</text><text x="1067" y="547">23:20</text><text x="1136" y="547">23:22</text><text x="1205" y="547">23:24</text>
<text x="238" y="607">22:56</text><text x="307" y="607">22:58</text><text x="376" y="607">23:00</text><text x="445" y="607">23:02</text><text x="514" y="607">23:04</text><text x="583" y="607">23:06</text><text x="652" y="607">23:08</text><text x="721" y="607">23:10</text><text x="790" y="607">23:12</text><text x="860" y="607">23:14</text><text x="929" y="607">23:16</text><text x="998" y="607">23:18</text><text x="1067" y="607">23:20</text><text x="1136" y="607">23:22</text><text x="1205" y="607">23:24</text>
<text x="238" y="667">22:56</text><text x="307" y="667">22:58</text><text x="376" y="667">23:00</text><text x="445" y="667">23:02</text><text x="514" y="667">23:04</text><text x="583" y="667">23:06</text><text x="652" y="667">23:08</text><text x="721" y="667">23:10</text><text x="790" y="667">23:12</text><text x="860" y="667">23:14</text><text x="929" y="667">23:16</text><text x="998" y="667">23:18</text><text x="1067" y="667">23:20</text><text x="1136" y="667">23:22</text><text x="1205" y="667">23:24</text>
<text x="238" y="727">22:56</text><text x="307" y="727">22:58</text><text x="376" y="727">23:00</text><text x="445" y="727">23:02</text><text x="514" y="727">23:04</text><text x="583" y="727">23:06</text><text x="652" y="727">23:08</text><text x="721" y="727">23:10</text><text x="790" y="727">23:12</text><text x="860" y="727">23:14</text><text x="929" y="727">23:16</text><text x="998" y="727">23:18</text><text x="1067" y="727">23:20</text><text x="1136" y="727">23:22</text><text x="1205" y="727">23:24</text>
<text x="238" y="788">22:56</text><text x="307" y="788">22:58</text><text x="376" y="788">23:00</text><text x="445" y="788">23:02</text><text x="514" y="788">23:04</text><text x="583" y="788">23:06</text><text x="652" y="788">23:08</text><text x="721" y="788">23:10</text><text x="790" y="788">23:12</text><text x="860" y="788">23:14</text><text x="929" y="788">23:16</text><text x="998" y="788">23:18</text><text x="1067" y="788">23:20</text><text x="1136" y="788">23:22</text><text x="1205" y="788">23:24</text>
<text x="238" y="850">22:56</text><text x="307" y="850">22:58</text><text x="376" y="850">23:00</text><text x="445" y="850">23:02</text><text x="514" y="850">23:04</text><text x="583" y="850">23:06</text><text x="652" y="850">23:08</text><text x="721" y="850">23:10</text><text x="790" y="850">23:12</text><text x="860" y="850">23:14</text><text x="929" y="850">23:16</text><text x="998" y="850">23:18</text><text x="1067" y="850">23:20</text><text x="1136" y="850">23:22</text><text x="1205" y="850">23:24</text>
<text x="238" y="911">22:56</text><text x="307" y="911">22:58</text><text x="376" y="911">23:00</text><text x="445" y="911">23:02</text><text x="514" y="911">23:04</text><text x="583" y="911">23:06</text><text x="652" y="911">23:08</text><text x="721" y="911">23:10</text><text x="790" y="911">23:12</text><text x="860" y="911">23:14</text><text x="929" y="911">23:16</text><text x="998" y="911">23:18</text><text x="1067" y="911">23:20</text><text x="1136" y="911">23:22</text><text x="1205" y="911">23:24</text>
<text x="238" y="973">22:56</text><text x="307" y="973">22:58</text><text x="376" y="973">23:00</text><text x="445" y="973">23:02</text><text x="514" y="973">23:04</text><text x="583" y="973">23:06</text><text x="652" y="973">23:08</text><text x="721" y="973">23:10</text><text x="790" y="973">23:12</text><text x="860" y="973">23:14</text><text x="929" y="973">23:16</text><text x="998" y="973">23:18</text><text x="1067" y="973">23:20</text><text x="1136" y="973">23:22</text><text x="1205" y="973">23:24</text>
</g>
<!-- axis ticks through the labels -->
<g stroke="#000" stroke-width="4" stroke-dasharray="1 68.100" fill="none" shape-rendering="crispEdges">
<path d="M237 361H1207"/><path d="M237 421H1207"/><path d="M237 481H1207"/><path d="M237 541H1207"/><path d="M237 601H1207"/><path d="M237 661H1207"/><path d="M237 721H1207"/><path d="M237 782H1207"/><path d="M237 843H1207"/><path d="M237 904H1207"/><path d="M237 967H1207"/>
</g>
</svg>
</body></html>
